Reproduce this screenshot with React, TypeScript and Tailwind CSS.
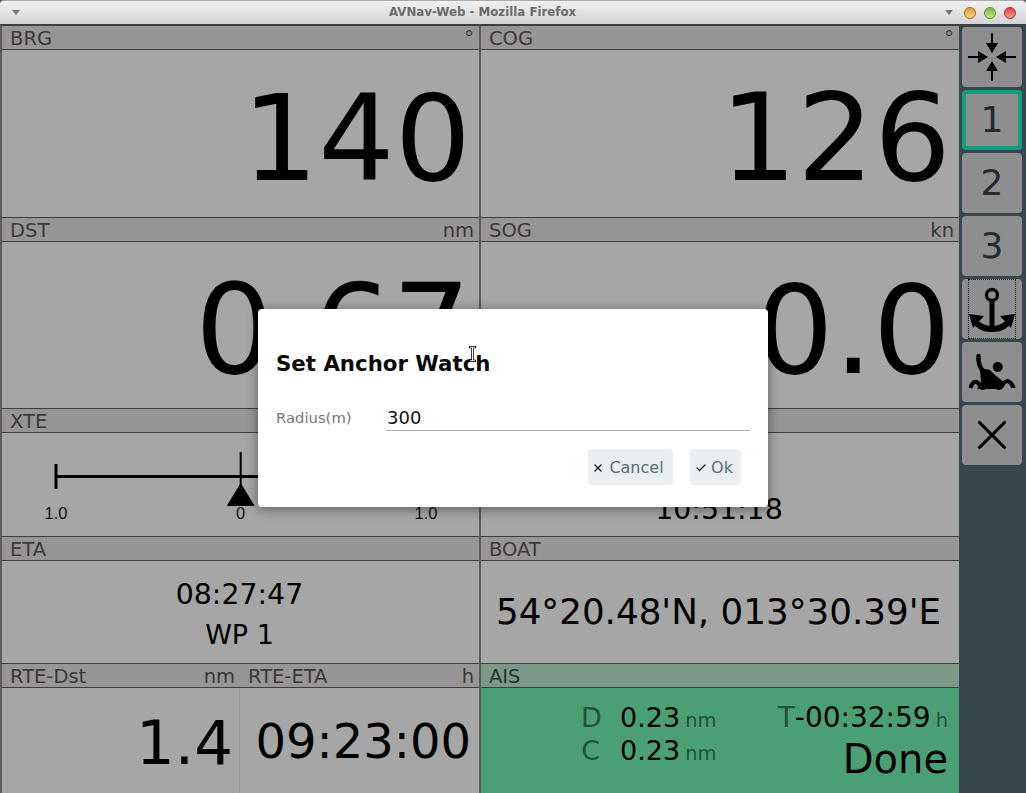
import type { ReactNode } from "react";
import { X, Check } from "lucide-react";

function Widget({ title, unit, children, green }: { title?: string; unit?: string; children?: ReactNode; green?: boolean }) {
  return (
    <div className={`min-w-0 flex flex-col border-t border-l-2 border-t-[#3f3f3f] border-l-[#5c5c5c] ${green ? "bg-[#4aa074]" : "bg-[#a6a6a6]"}`}>
      <div className={`h-[24px] shrink-0 flex items-center justify-between pl-2 pr-[5px] pt-[3px] border-b border-[#3f3f3f] text-[19.500px] leading-none ${green ? "bg-[#7c9889] text-[#24382d]" : "bg-[#979595] text-[#3a3a3a]"}`}>
        <span>{title}</span>
        {unit && <span>{unit}</span>}
      </div>
      {children}
    </div>
  );
}

function BigValue({ value, size }: { value: string; size: string }) {
  return <div className={`flex-1 flex items-center justify-end pr-[8px] pt-[10px] leading-none text-black ${size}`}>{value}</div>;
}

function SideButton({ children, active }: { children: ReactNode; active?: boolean }) {
  return (
    <div className={`w-[60px] h-[60px] rounded-[4px] bg-[#8e8e8e] flex items-center justify-center text-[36px] text-[#222b30] ${active ? "border-[4px] border-[#0f9f7c]" : ""}`}>
      {children}
    </div>
  );
}

function CompressIcon() {
  return (
    <svg width="60" height="60" viewBox="0 0 60 60" fill="black">
      <path d="M29 6h2v10h5l-6 10-6-10h5z" />
      <path d="M29 54h2V44h5l-6-10-6 10h5z" />
      <path d="M6 29v2h10v5l10-6-10-6v5z" />
      <path d="M54 29v2H44v5l-10-6 10-6v5z" />
    </svg>
  );
}

function AnchorIcon() {
  return (
    <svg width="46" height="58" viewBox="0 0 46 58" className="outline-1 outline-dotted outline-black">
      <circle cx="23" cy="15" r="5.500" fill="none" stroke="black" strokeWidth="3.300" />
      <path d="M23 20v28" stroke="black" strokeWidth="5" />
      <path d="M5 40c4 6 11 9 18 9s14-3 18-9" fill="none" stroke="black" strokeWidth="6" />
      <path d="M0 34l15 2-11 12zM46 34l-15 2 11 12z" fill="black" />
    </svg>
  );
}

function SwimIcon() {
  return (
    <svg width="60" height="60" viewBox="0 0 60 60" fill="black">
      <circle cx="35.700" cy="25" r="5" />
      <path d="M16.500 14c-.5 6 1 10 3.500 14" fill="none" stroke="black" strokeWidth="4.500" strokeLinecap="round" />
      <path d="M18 26l10 2 5 5 10 8-6 6H15l4-7z" />
      <path d="M8.500 46c2-7 6-8 9-3 2 4 5 4 7 0 3-5 6-5 9 0 2 4 5 4 7 0 3-5 6-5 9-1 1 2 2 3 2 4" fill="none" stroke="black" strokeWidth="4" />
    </svg>
  );
}

function XteGraph() {
  return (
    <svg width="477" height="103" viewBox="0 0 477 103" className="block">
      <g stroke="black" fill="none">
        <path d="M54 43.500h370" strokeWidth="3" />
        <path d="M54 31v25M424 31v25" strokeWidth="3" />
        <path d="M238.700 19v34" strokeWidth="2" />
      </g>
      <path d="M238.700 50l14 23h-28z" fill="black" />
      <g fontFamily="'Liberation Sans', sans-serif" fontSize="16.500" textAnchor="middle" fill="#111">
        <text x="54" y="86">1.0</text>
        <text x="238.700" y="86">0</text>
        <text x="424" y="86">1.0</text>
      </g>
    </svg>
  );
}

export default function App() {
  return (
    <div className="relative w-[1026px] h-[793px] overflow-hidden flex flex-col bg-[#37474f] font-['DejaVu_Sans',sans-serif]">
      {/* Window title bar */}
      <div className="h-[25px] shrink-0 flex items-center pl-[12px] pr-[10px] rounded-t-[4px] border-t border-b border-t-[#aaa] border-b-[#3f3f3f] bg-gradient-to-b from-[#f1f1f1] to-[#d3d3d3]">
        <div className="w-0 h-0 border-x-[4px] border-t-[5px] border-x-transparent border-t-[#777]" />
        <span className="ml-[369px] pt-px text-[11.800px] font-bold text-[#6b6b6b]">AVNav-Web - Mozilla Firefox</span>
        <div className="ml-auto flex items-center gap-[8px]">
          <div className="w-0 h-0 mr-[3px] border-x-[4px] border-t-[5px] border-x-transparent border-t-[#777]" />
          <div className="w-[12px] h-[12px] rounded-full border border-[#9a6a1c] bg-gradient-to-b from-[#e59a2e] to-[#f8d97c]" />
          <div className="w-[12px] h-[12px] rounded-full border border-[#5e8a34] bg-gradient-to-b from-[#79b63e] to-[#c3e58a]" />
          <div className="w-[12px] h-[12px] rounded-full border border-[#a02c2c] bg-gradient-to-b from-[#e23b3b] to-[#f59a9a]" />
        </div>
      </div>

      <div className="flex-1 min-h-0 flex">
        <div className="w-[959px] grid grid-cols-[479px_480px] grid-rows-[192px_191px_128px_127px_130px] border-b-2 border-[#5c5c5c]">
          <Widget title="BRG" unit="°"><BigValue value="140" size="text-[120px]" /></Widget>
          <Widget title="COG" unit="°"><BigValue value="126" size="text-[121px]" /></Widget>
          <Widget title="DST" unit="nm"><BigValue value="0.67" size="text-[124px]" /></Widget>
          <Widget title="SOG" unit="kn"><BigValue value="0.0" size="text-[123px]" /></Widget>
          <Widget title="XTE"><XteGraph /></Widget>
          <Widget>
            <div className="flex-1 flex items-end justify-center pb-[12px] pr-[2px] text-[28.400px] leading-none text-black">10:51:18</div>
          </Widget>
          <Widget title="ETA">
            <div className="flex-1 flex flex-col items-center justify-center gap-[11px] pt-[5px] pr-[2px] text-black leading-none">
              <span className="text-[28.400px]">08:27:47</span>
              <span className="text-[27px]">WP 1</span>
            </div>
          </Widget>
          <Widget title="BOAT">
            <div className="flex-1 flex items-center justify-center pr-[3px] text-[35.700px] leading-none text-black">54°20.48'N, 013°30.39'E</div>
          </Widget>
          <div className="min-w-0 grid grid-cols-[240px_1fr]">
            <Widget title="RTE-Dst" unit="nm">
              <div className="flex-1 flex items-center justify-end pr-[6px] pt-[3px] text-[61px] leading-none text-black border-r border-[#999]">1.4</div>
            </Widget>
            <div className="min-w-0 flex flex-col border-t border-t-[#3f3f3f] bg-[#a6a6a6]">
              <div className="h-[24px] shrink-0 flex items-center justify-between pl-2 pr-[5px] pt-[3px] border-b border-[#3f3f3f] bg-[#979595] text-[19.500px] leading-none text-[#3a3a3a]">
                <span>RTE-ETA</span>
                <span>h</span>
              </div>
              <div className="flex-1 flex items-center justify-end pr-[8px] text-[48px] leading-none text-black">09:23:00</div>
            </div>
          </div>
          <Widget title="AIS" green>
            <div className="flex-1 flex justify-between pl-[100px] pr-[11px] pt-[16px] text-black">
              <div className="flex flex-col gap-[6px] leading-none">
                <div className="flex items-baseline">
                  <span className="w-[19px] text-right text-[27px] text-[#24503c]">D</span>
                  <span className="ml-[20px] text-[27px]">0.23</span>
                  <span className="ml-[5px] text-[19.500px] text-[#24503c]">nm</span>
                </div>
                <div className="flex items-baseline">
                  <span className="w-[19px] text-right text-[27px] text-[#24503c]">C</span>
                  <span className="ml-[20px] text-[27px]">0.23</span>
                  <span className="ml-[5px] text-[19.500px] text-[#24503c]">nm</span>
                </div>
              </div>
              <div className="flex flex-col items-end leading-none">
                <div className="flex items-baseline text-[28px]">
                  <span className="text-[#24503c]">T</span>
                  <span>-00:32:59</span>
                  <span className="ml-[5px] text-[19.500px] text-[#24503c]">h</span>
                </div>
                <span className="mt-[7px] text-[40px]">Done</span>
              </div>
            </div>
          </Widget>
        </div>

        {/* Right button bar */}
        <div className="flex-1 flex flex-col gap-[3px] pt-[2px] pl-[3px]">
          <SideButton><CompressIcon /></SideButton>
          <SideButton active>1</SideButton>
          <SideButton>2</SideButton>
          <SideButton>3</SideButton>
          <SideButton><AnchorIcon /></SideButton>
          <SideButton><SwimIcon /></SideButton>
          <SideButton><X size={50} strokeWidth={1.5} color="#000" /></SideButton>
        </div>
      </div>

      {/* Anchor watch dialog */}
      <div className="absolute left-[258px] top-[309px] w-[510px] h-[198px] rounded-[4px] bg-white shadow-[0_2px_12px_rgba(0,0,0,0.45)] flex flex-col pl-[18px] pr-[18px]">
        <div className="mt-[41px] text-[21.300px] font-bold leading-[28px] text-[#0a0a0a]">Set Anchor Watch</div>
        <div className="mt-[27px] flex items-end">
          <span className="w-[110px] pb-[4px] text-[14.800px] leading-[18px] text-[#777]">Radius(m)</span>
          <div className="flex-1 h-[26px] border-b border-[#aaa] text-[18px] leading-[26px] text-[#111] pl-px">300</div>
        </div>
        <div className="mt-[18px] flex justify-end gap-[17px] pr-[9px]">
          <button className="h-[36px] w-[85px] rounded-[4px] bg-[#eceff1] flex items-center justify-center gap-[5px] pr-[5px] pt-px text-[16px] text-[#546e7a]">
            <X size={12} strokeWidth={2.500} color="#111" />Cancel
          </button>
          <button className="h-[36px] w-[51px] rounded-[4px] bg-[#eceff1] flex items-center justify-center gap-[4px] pr-[3px] pt-px text-[16px] text-[#546e7a]">
            <Check size={12} strokeWidth={2.500} color="#111" />Ok
          </button>
        </div>
      </div>

      {/* Text cursor over the dialog */}
      <svg width="9" height="16" viewBox="0 0 9 16" className="absolute left-[468px] top-[346px]">
        <path d="M1 1h7M4.500 1v14M1 15h7" stroke="black" strokeWidth="2.500" />
        <path d="M2 1.200h5M4.500 1.500v13M2 14.800h5" stroke="white" strokeWidth="1" />
      </svg>
    </div>
  );
}
